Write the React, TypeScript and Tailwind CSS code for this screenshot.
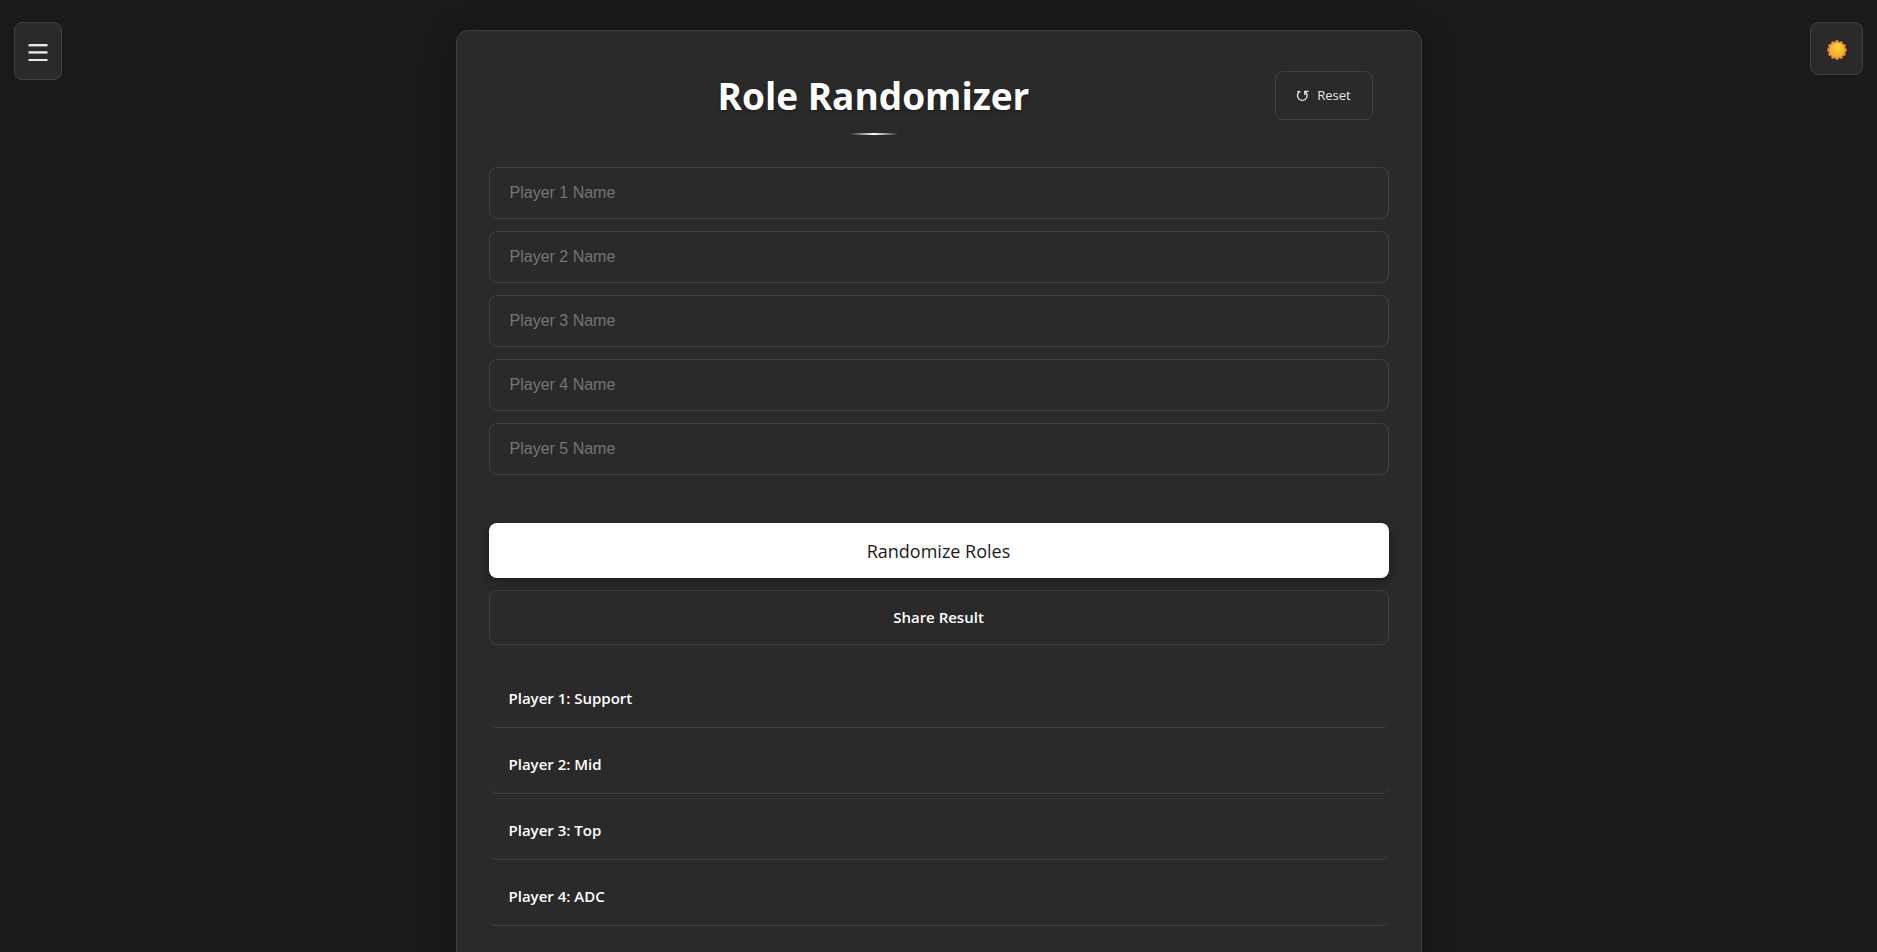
import { useState } from "react";

const ROLES = ["Support", "Mid", "Top", "ADC", "Jungle"];

function MenuIcon() {
  return (
    <svg width="20" height="18" viewBox="0 0 20 18" fill="#e8e8e8" aria-hidden="true">
      <rect x="0.5" y="0" width="19" height="2.4" />
      <rect x="0.5" y="7.2" width="19" height="2.4" />
      <rect x="0.5" y="15" width="19" height="2" />
    </svg>
  );
}

function SunIcon() {
  const points = Array.from({ length: 12 }, (_, i) => {
    const a = (i * Math.PI) / 6;
    return [10 + 8 * Math.sin(a), 10 - 8 * Math.cos(a)];
  });
  return (
    <svg width="20" height="20" viewBox="0 0 20 20" aria-hidden="true">
      <defs>
        <radialGradient id="sun" cx="0.6" cy="0.3" r="0.8">
          <stop offset="0" stopColor="#fbd33c" />
          <stop offset="1" stopColor="#eda52e" />
        </radialGradient>
      </defs>
      {points.map(([x, y]) => (
        <circle key={`${x}-${y}`} cx={x} cy={y} r="1.9" fill="#f0883a" />
      ))}
      <circle cx="10" cy="10" r="8" fill="#f0883a" />
      <circle cx="10" cy="10" r="7.6" fill="url(#sun)" />
    </svg>
  );
}

function ResetIcon() {
  return (
    <svg width="13" height="12" viewBox="0 0 13 12" fill="none" stroke="currentColor" strokeWidth="1.4" aria-hidden="true">
      <path d="M4.4 1.6H1.4M3.4 1.8A4.8 4.8 0 1 0 9.2 1.8" />
      <path d="M12.6 1.4H8.8V5" />
    </svg>
  );
}

export default function App() {
  const [names, setNames] = useState<string[]>(["", "", "", "", ""]);
  const [roles, setRoles] = useState(ROLES);

  const randomize = () =>
    setRoles([...roles].map((r) => ({ r, k: Math.random() })).sort((a, b) => a.k - b.k).map(({ r }) => r));

  return (
    <div className="flow-root min-h-screen bg-[#1a1a1a] pb-8 font-['Open_Sans',sans-serif] text-white">
      <button
        type="button"
        aria-label="Open menu"
        className="fixed left-3.5 top-[22px] flex h-[58px] w-12 items-center justify-center rounded-lg border border-[#404040] bg-[#2a2a2a] pt-1"
      >
        <MenuIcon />
      </button>
      <button
        type="button"
        aria-label="Toggle theme"
        className="fixed right-3.5 top-[22px] flex h-[53px] w-[53px] items-center justify-center rounded-lg border border-[#404040] bg-[#2a2a2a] pt-0.5"
      >
        <SunIcon />
      </button>

      <main className="mx-auto mt-[30px] max-w-[966px] rounded-xl border border-[#404040] bg-[#2a2a2a] px-8 py-10 shadow-[0_8px_32px_rgba(0,0,0,0.3)]">
        <header className="flex items-start gap-4 pr-4">
          <div className="flex flex-1 flex-col items-center">
            <h1 className="text-[37px] font-bold leading-[50px] [text-shadow:0_2px_4px_rgba(0,0,0,0.3)]">Role Randomizer</h1>
            <span className="mt-3 h-0.5 w-12 rounded-sm bg-linear-to-r from-transparent via-white to-transparent" />
          </div>
          <button
            type="button"
            onClick={() => setNames(["", "", "", "", ""])}
            className="flex h-[49px] w-[98px] items-center justify-center gap-2 rounded-lg border border-[#404040] text-[13px] font-medium text-[#e8e8e8]"
          >
            <ResetIcon />
            Reset
          </button>
        </header>

        <div className="mt-8 flex flex-col gap-3">
          {names.map((name, i) => (
            <input
              key={i}
              type="text"
              aria-label={`Player ${i + 1} Name`}
              placeholder={`Player ${i + 1} Name`}
              value={name}
              onChange={(e) => setNames(names.map((n, j) => (j === i ? e.target.value : n)))}
              className="h-[52px] rounded-lg border border-[#404040] px-5 font-['Liberation_Sans',sans-serif] text-base text-white placeholder:text-[#757575]"
            />
          ))}
        </div>

        <div className="mt-12 flex flex-col gap-3">
          <button
            type="button"
            onClick={randomize}
            className="h-[55px] rounded-lg bg-white text-lg font-medium text-[#1a1a1a] shadow-[0_4px_12px_rgba(0,0,0,0.3)]"
          >
            Randomize Roles
          </button>
          <button type="button" className="h-[55px] rounded-lg border border-[#404040] text-[15px] font-semibold">
            Share Result
          </button>
        </div>

        <ul className="mt-[29px] flex flex-col gap-3">
          {roles.map((role, i) => (
            <li key={i} className="rounded-lg border-b border-[#404040] px-5 pb-[18px] pt-[13px] text-[15px] font-semibold leading-[22px]">
              {names[i] || `Player ${i + 1}`}: {role}
            </li>
          ))}
        </ul>
      </main>
    </div>
  );
}
